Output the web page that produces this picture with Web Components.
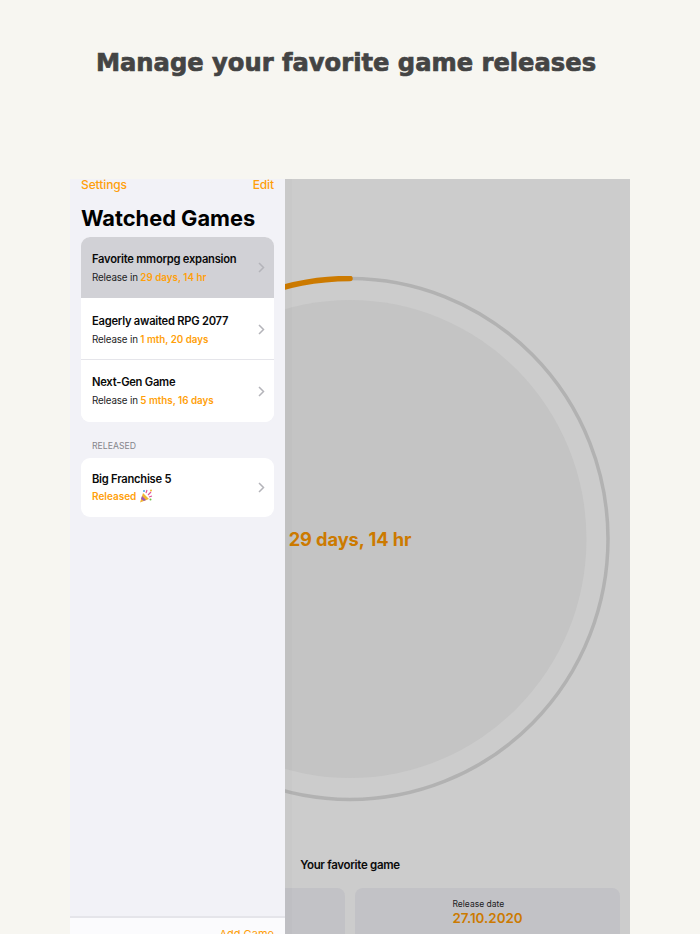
<!DOCTYPE html>
<html>
<head>
<meta charset="utf-8">
<title>Watched Games</title>
<style>
	html, body { margin: 0; height: 934px; overflow: hidden; background: #f7f6f1; }
	body { font-family: 'Inter', 'Liberation Sans', sans-serif; }
</style>
</head>
<body>
<promo-page title="Manage your favorite game releases">
	<game-detail slot="detail" remaining="29 days, 14 hr" name="Your favorite game" date="27.10.2020"></game-detail>
	<game-sidebar slot="sidebar">
		<game-row selected name="Favorite mmorpg expansion" remaining="29 days, 14 hr"></game-row>
		<game-row divider name="Eagerly awaited RPG 2077" remaining="1 mth, 20 days"></game-row>
		<game-row name="Next-Gen Game" remaining="5 mths, 16 days"></game-row>
		<game-row slot="released" released name="Big Franchise 5"></game-row>
	</game-sidebar>
</promo-page>

<script>
class PromoPage extends HTMLElement {

	constructor() {

		super();

		this.attachShadow({ mode: 'open' });
		this.shadowRoot.innerHTML = `
			<style>
				:host {
					display: block;
					height: 934px;
					overflow: hidden;
				}

				header {
					height: 179px;
					box-sizing: border-box;
					padding: 45px 8px 0 0;
					text-align: center;
				}

				h1 {
					margin: 0;
					font: 700 24.2px/36px 'DejaVu Sans', sans-serif;
					color: #444444;
					-webkit-text-stroke: 0.7px #444444;
				}

				.screen {
					position: relative;
					width: 560px;
					height: 755px;
					margin: 0 auto;
					overflow: hidden;
				}

				::slotted([slot="sidebar"]) {
					position: absolute;
					left: 0;
					top: 0;
					bottom: 0;
				}
			</style>
			<header><h1>${this.getAttribute('title')}</h1></header>
			<div class="screen">
				<slot name="detail"></slot>
				<slot name="sidebar"></slot>
			</div>
		`;

	}

}

class GameDetail extends HTMLElement {

	constructor() {

		super();

		this.attachShadow({ mode: 'open' });
		this.shadowRoot.innerHTML = `
			<style>
				:host {
					display: flex;
					flex-direction: column;
					align-items: center;
					height: 100%;
					background: #cccccc;
				}

				.ring {
					position: relative;
					display: grid;
					place-items: center;
					flex: none;
					width: 526px;
					height: 526px;
					margin-top: 97px;
				}

				svg {
					position: absolute;
					inset: 0;
				}

				.left {
					position: relative;
					font-size: 18.3px;
					font-weight: 700;
					letter-spacing: -0.1px;
					color: #cc7a00;
				}

				h2 {
					margin: 54px 0 0;
					font-size: 11.5px;
					line-height: 18px;
					font-weight: 600;
					letter-spacing: -0.3px;
					color: #0a0a0a;
				}

				.cards {
					display: grid;
					grid-template-columns: 1fr 1fr;
					gap: 10px;
					align-self: stretch;
					flex: none;
					margin: 14px 10px 0;
				}

				.card {
					display: flex;
					flex-direction: column;
					align-items: center;
					height: 70px;
					padding-top: 10px;
					box-sizing: border-box;
					background: #c2c2c6;
					border-radius: 8px;
				}

				.card div { width: 70px; }

				small {
					display: block;
					font-size: 8.5px;
					line-height: 12px;
					color: #1c1c1e;
				}

				b {
					display: block;
					font-size: 13.4px;
					line-height: 16px;
					font-weight: 600;
					color: #cc7a00;
				}
			</style>
			<div class="ring">
				<svg width="526" height="526" viewBox="0 0 526 526">
					<ellipse cx="263" cy="263" rx="236.5" ry="239" fill="#c4c4c4"></ellipse>
					<ellipse cx="263" cy="263" rx="258" ry="260.5" fill="none" stroke="#b2b2b2" stroke-width="3.5"></ellipse>
					<path d="M263 2.5A258 260.5 0 0 0 5 263" fill="none" stroke="#cc7a00" stroke-width="5.5" stroke-linecap="round"></path>
				</svg>
				<span class="left">${this.getAttribute('remaining')}</span>
			</div>
			<h2>${this.getAttribute('name')}</h2>
			<div class="cards">
				<div class="card"></div>
				<div class="card"><div><small>Release date</small><b>${this.getAttribute('date')}</b></div></div>
			</div>
		`;

	}

}

class GameSidebar extends HTMLElement {

	constructor() {

		super();

		this.attachShadow({ mode: 'open' });
		this.shadowRoot.innerHTML = `
			<style>
				:host {
					display: flex;
					flex-direction: column;
					width: 215px;
					background: #f2f2f7;
					box-shadow: 7px 0 0 rgba(0, 0, 0, 0.012);
				}

				nav {
					display: flex;
					justify-content: space-between;
					padding: 0 11px;
					font-size: 12px;
					line-height: 12px;
					font-weight: 500;
					letter-spacing: -0.1px;
					color: #ff9f0a;
				}

				h1 {
					margin: 10px 11px 2px;
					font-size: 21.8px;
					line-height: 34px;
					font-weight: 700;
					color: #000000;
				}

				.group {
					display: flex;
					flex-direction: column;
					margin: 0 11px;
					border-radius: 9px;
					overflow: hidden;
					background: #ffffff;
				}

				h3 {
					margin: 18px 11px 6px 22px;
					font-size: 8.7px;
					line-height: 12px;
					font-weight: 400;
					color: #85858b;
				}

				footer {
					display: flex;
					justify-content: flex-end;
					margin-top: auto;
					height: 18px;
					box-sizing: border-box;
					padding: 9px 11px 0;
					border-top: 2px solid #e5e5ea;
					background: #fbfbfd;
					font-size: 11px;
					line-height: 14px;
					color: #ff9f0a;
				}
			</style>
			<nav><span>Settings</span><span>Edit</span></nav>
			<h1>Watched Games</h1>
			<div class="group"><slot></slot></div>
			<h3>RELEASED</h3>
			<div class="group"><slot name="released"></slot></div>
			<footer><span>Add Game</span></footer>
		`;

	}

}

class GameRow extends HTMLElement {

	constructor() {

		super();

		const released = this.hasAttribute('released');
		const status = released
			? `<em>Released</em> ${GameRow.popper}`
			: `Release in <em>${this.getAttribute('remaining')}</em>`;

		this.attachShadow({ mode: 'open' });
		this.shadowRoot.innerHTML = `
			<style>
				:host {
					display: flex;
					align-items: center;
					justify-content: space-between;
					height: ${released ? 59 : 61}px;
					box-sizing: border-box;
					padding: 0 9px 0 11px;
					background: #ffffff;
				}

				:host([selected]) { background: #d1d1d6; margin-bottom: 1px; }
				:host([divider]) { box-shadow: inset 0 -1px 0 #e5e5ea; margin-bottom: 1px; }
				:host([selected]) .text, :host([divider]) .text { padding-top: 2px; }
				:host([released]) h4 { margin-bottom: 2px; }
				:host([released]) em { font-size: 10px; }

				h4 {
					margin: 0 0 4px;
					font-size: 11.2px;
					line-height: 15px;
					font-weight: 600;
					letter-spacing: -0.25px;
					color: #0a0a0a;
				}

				p {
					display: flex;
					align-items: center;
					gap: 2.5px;
					margin: 0;
					font-size: 9.8px;
					line-height: 14px;
					letter-spacing: -0.15px;
					color: #1c1c1e;
				}

				em {
					font-style: normal;
					font-weight: 600;
					letter-spacing: 0;
					color: #ff9f0a;
					margin-left: 1px;
				}

				p em:first-child { margin-left: 0; }
			</style>
			<div class="text">
				<h4>${this.getAttribute('name')}</h4>
				<p>${status}</p>
			</div>
			<svg width="7" height="11" viewBox="0 0 7 11"><path d="M1 1l4.5 4.5L1 10" fill="none" stroke="#b4b4ba" stroke-width="1.5"></path></svg>
		`;

	}

}

GameRow.popper = `
	<svg width="14" height="14" viewBox="0 0 14 14">
		<path d="M1 13.5L4 4l6 6z" fill="#f2b632"></path>
		<path d="M3 7l4 4-2 1-3-2z" fill="#9b59b6"></path>
		<path d="M7 4l1-3M9 6l3-3M10 8l3-1" stroke="#e0559a" stroke-width="1.2" fill="none"></path>
		<circle cx="5" cy="2" r="1" fill="#4aa3e0"></circle>
		<circle cx="11.5" cy="10.5" r="1" fill="#6fbf4a"></circle>
		<circle cx="12" cy="1.5" r="1" fill="#f2b632"></circle>
	</svg>
`;

customElements.define('promo-page', PromoPage);
customElements.define('game-detail', GameDetail);
customElements.define('game-sidebar', GameSidebar);
customElements.define('game-row', GameRow);
</script>
</body>
</html>
